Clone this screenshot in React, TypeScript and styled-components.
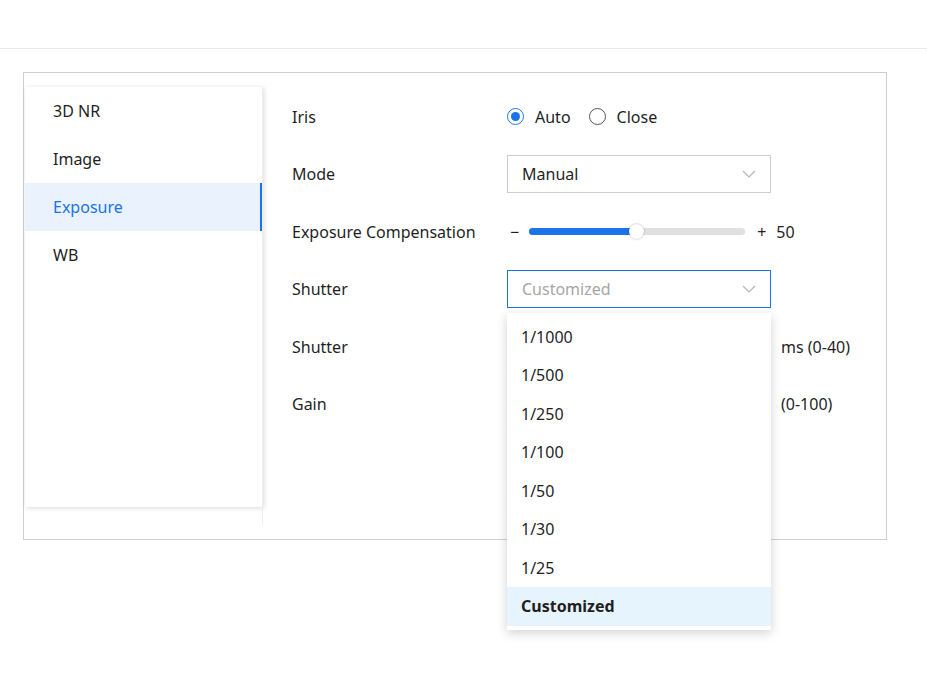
import styled, { createGlobalStyle } from "styled-components";

const Global = createGlobalStyle`
  html, body { margin: 0; background: #fff; font-family: "Noto Sans", "Open Sans", sans-serif; color: #1f1f1f; }
  body { min-height: 686px; }
`;

const Header = styled.div`
  height: 48px;
  border-bottom: 1px solid #ebebeb;
`;

const Panel = styled.div`
  margin: 23px 40px 0 23px;
  height: 468px;
  border: 1px solid #cfcfcf;
  display: flex;
  padding: 14px 0 0 1px;
  box-sizing: border-box;
  overflow: visible;
`;

const Side = styled.div`
  width: 238px;
  height: 420px;
  box-shadow: 1px 1px 5px rgba(0,0,0,0.15);
  flex-shrink: 0;
`;

const SideItem = styled.div<{ $active?: boolean }>`
  height: 48px;
  display: flex;
  align-items: center;
  padding-left: 28px;
  font-size: 16px;
  color: ${p => (p.$active ? "#1a73e8" : "#1f1f1f")};
  background: ${p => (p.$active ? "#e9f2fd" : "transparent")};
  border-right: ${p => (p.$active ? "3px solid #1a73e8" : "none")};
`;

const Content = styled.div`
  flex: 1;
  padding: 1px 0 0 29px;
  border-left: 1px solid #eee;
  height: 436px;
  margin-left: -1px;
`;

const Row = styled.div<{ $top?: boolean }>`
  height: 57.5px;
  display: flex;
  align-items: center;
  font-size: 16px;
  position: relative;
  z-index: ${p => (p.$top ? 5 : 1)};
`;

const Label = styled.div`
  width: 215px;
`;

const Radio = styled.span<{ $on?: boolean }>`
  width: 17px;
  height: 17px;
  border-radius: 50%;
  border: 1px solid ${p => (p.$on ? "#1a73e8" : "#555")};
  box-sizing: border-box;
  display: inline-flex;
  align-items: center;
  justify-content: center;
  margin-right: 11px;
  &::after {
    content: "";
    width: 9px;
    height: 9px;
    border-radius: 50%;
    background: ${p => (p.$on ? "#1a73e8" : "transparent")};
  }
`;

const RadioOpt = styled.label`
  display: flex;
  align-items: center;
  margin-right: 18px;
`;

const Select = styled.div<{ $focus?: boolean }>`
  width: 264px;
  height: 38px;
  box-sizing: border-box;
  border: 1px solid ${p => (p.$focus ? "#1a73e8" : "#ccc")};
  display: flex;
  align-items: center;
  justify-content: space-between;
  padding: 0 14px;
  color: ${p => (p.$focus ? "#a6a6a6" : "#1f1f1f")};
`;

const Slider = styled.div`
  display: flex;
  align-items: center;
  gap: 10px;
  padding-left: 3px;
`;

const Track = styled.div`
  width: 216px;
  height: 7px;
  border-radius: 4px;
  background: #e0e0e2;
  position: relative;
`;

const Fill = styled.div`
  height: 100%;
  border-radius: 4px;
  background: #1a73e8;
`;

const Knob = styled.div`
  position: absolute;
  top: -4px;
  width: 15px;
  height: 15px;
  margin-left: -8px;
  border-radius: 50%;
  background: #fff;
  box-shadow: 0 0 2px rgba(0,0,0,0.35);
`;

const Suffix = styled.span`
  position: absolute;
  left: 489px;
`;

const Menu = styled.div`
  position: absolute;
  left: 215px;
  top: 52px;
  width: 264px;
  background: #fff;
  box-shadow: 0 3px 10px rgba(0,0,0,0.18);
  padding: 5px 0 4px;
  z-index: 10;
`;

const MenuItem = styled.div<{ $sel?: boolean }>`
  height: 38.5px;
  display: flex;
  align-items: center;
  padding-left: 14px;
  font-weight: ${p => (p.$sel ? 700 : 400)};
  background: ${p => (p.$sel ? "#e6f4fd" : "#fff")};
`;

const Chevron = () => (
  <svg width="14" height="8" viewBox="0 0 14 8">
    <path d="M1 1l6 6 6-6" fill="none" stroke="#b5b5b5" strokeWidth="1.2" />
  </svg>
);

const options = ["1/1000", "1/500", "1/250", "1/100", "1/50", "1/30", "1/25", "Customized"];

export default function App() {
  const value = 50;
  return (
    <>
      <Global />
      <Header />
      <Panel>
        <Side>
          <SideItem>3D NR</SideItem>
          <SideItem>Image</SideItem>
          <SideItem $active>Exposure</SideItem>
          <SideItem>WB</SideItem>
        </Side>
        <Content>
          <Row>
            <Label>Iris</Label>
            <RadioOpt><Radio $on />Auto</RadioOpt>
            <RadioOpt><Radio />Close</RadioOpt>
          </Row>
          <Row>
            <Label>Mode</Label>
            <Select>Manual<Chevron /></Select>
          </Row>
          <Row>
            <Label>Exposure Compensation</Label>
            <Slider>
              <span>−</span>
              <Track>
                <Fill style={{ width: `${value}%` }} />
                <Knob style={{ left: `${value}%` }} />
              </Track>
              <span style={{ marginLeft: 2 }}>+</span>
              <span>{value}</span>
            </Slider>
          </Row>
          <Row $top>
            <Label>Shutter</Label>
            <Select $focus>Customized<Chevron /></Select>
            <Menu>
              {options.map(o => (
                <MenuItem key={o} $sel={o === "Customized"}>{o}</MenuItem>
              ))}
            </Menu>
          </Row>
          <Row>
            <Label>Shutter</Label>
            <Suffix>ms (0-40)</Suffix>
          </Row>
          <Row>
            <Label>Gain</Label>
            <Suffix>(0-100)</Suffix>
          </Row>
        </Content>
      </Panel>
    </>
  );
}
